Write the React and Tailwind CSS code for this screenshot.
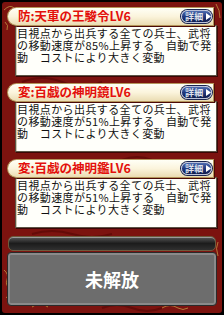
import React from "react";

const cards = [
  {
    title: "防:天軍の王駿令LV6",
    lines: ["目視点から出兵する全ての兵士、武将", "の移動速度が85%上昇する　自動で発", "動　コストにより大きく変動"],
  },
  {
    title: "変:百戯の神明鏡LV6",
    lines: ["目視点から出兵する全ての兵士、武将", "の移動速度が51%上昇する　自動で発", "動　コストにより大きく変動"],
  },
  {
    title: "変:百戯の神明鑑LV6",
    lines: ["目視点から出兵する全ての兵士、武将", "の移動速度が51%上昇する　自動で発", "動　コストにより大きく変動"],
  },
];

function DetailButton() {
  return (
    <div className="flex h-[13px] w-[31px] items-center rounded-full border border-[#b9c0da] bg-linear-to-b from-[#4f6cae] via-[#223a80] to-[#101c4c] pl-[3px] shadow-[0_0_0_1px_#1b2550]">
      <span className="text-[9px] font-bold leading-none tracking-[0.3px] text-[#dfe2ec]">詳細</span>
      <svg width="5" height="7" viewBox="0 0 5 7" className="ml-[2px]">
        <path d="M0 0 L5 3.5 L0 7 Z" fill="#ffffff" />
      </svg>
    </div>
  );
}

function Card({ title, lines }) {
  return (
    <div className="flex flex-col">
      <div className="relative z-10 flex h-[19px] w-[207px] items-center justify-between rounded-l-full rounded-r-[6px] border border-[#b4955a] bg-linear-to-b from-[#fffff6] via-[#fbf4dc] to-[#eadcb2] pl-[10px] pr-[1px] shadow-[1px_1px_0_#4a0a06]">
        <span className="text-[12.5px] font-bold leading-none text-[#e3100c]">{title}</span>
        <DetailButton />
      </div>
      <div className="ml-[8px] -mt-[1px] h-[51px] w-[202px] border border-[#5c5444] bg-[#fffffa] pl-[1px] pt-[1px] shadow-[inset_1px_1px_0_#cfc8b4,1px_1px_0_#3a0604]">
        {lines.map((l, i) => (
          <div key={i} className="h-[12px] whitespace-nowrap text-[11px] leading-[12px] tracking-[0.4px] text-[#111]">
            {l}
          </div>
        ))}
      </div>
    </div>
  );
}

function Ornaments() {
  return (
    <svg className="pointer-events-none absolute inset-0" width="220" height="311" viewBox="0 0 220 311">
      <g fill="none" stroke="#5a0806" strokeWidth="2" opacity="0.7">
        <path d="M20 80 q20 -8 40 0 t40 0" />
        <path d="M120 158 q15 -6 30 0 t30 0" />
        <path d="M30 232 q20 -6 40 0 t40 0" />
        <path d="M100 306 q15 -6 30 0 t30 0" />
      </g>
      <g fill="none" stroke="#c9a24a" strokeWidth="0.8" opacity="0.9">
        <path d="M2 8 q6 -6 10 -2 q3 4 -2 6" />
        <path d="M3 20 q4 3 2 8" />
        <path d="M214 2 q4 6 4 14" />
        <path d="M216 40 q-3 5 0 10" />
        <path d="M2 268 q5 4 3 10 q-2 5 3 9" />
        <path d="M4 295 q6 6 14 6" />
        <path d="M30 305 q8 -6 16 0" />
        <path d="M160 306 q8 -5 16 0 q5 3 10 0" />
        <path d="M200 300 q6 -4 12 2" />
        <path d="M216 240 q-3 6 0 14" />
      </g>
    </svg>
  );
}

export default function App() {
  return (
    <div className="h-[315px] w-[224px] bg-black p-[2px] font-['Noto_Sans_CJK_JP','Noto_Sans',sans-serif]">
      <div className="relative flex h-full w-full flex-col rounded-[3px] bg-[#7c130f] px-[5px] pt-[5px]">
        <Ornaments />
        <div className="relative flex flex-col gap-[7px]">
          {cards.map((c, i) => (
            <Card key={i} {...c} />
          ))}
        </div>
        <div className="relative mx-[1px] mt-[8px] h-[15px] rounded-[5px] border border-[#6d5a3c] bg-linear-to-b from-[#5a5a5a] via-[#1c1c1c] to-[#303030] shadow-[inset_0_1px_0_#9a9a9a]" />
        <div className="relative mt-[1px] flex h-[54px] items-center justify-center rounded-[4px] border border-[#2a2a2a] bg-[#6d6d6d] shadow-[inset_0_0_0_2px_#8a8a8a]">
          <span className="text-[18px] font-bold leading-none text-white">未解放</span>
        </div>
      </div>
    </div>
  );
}
